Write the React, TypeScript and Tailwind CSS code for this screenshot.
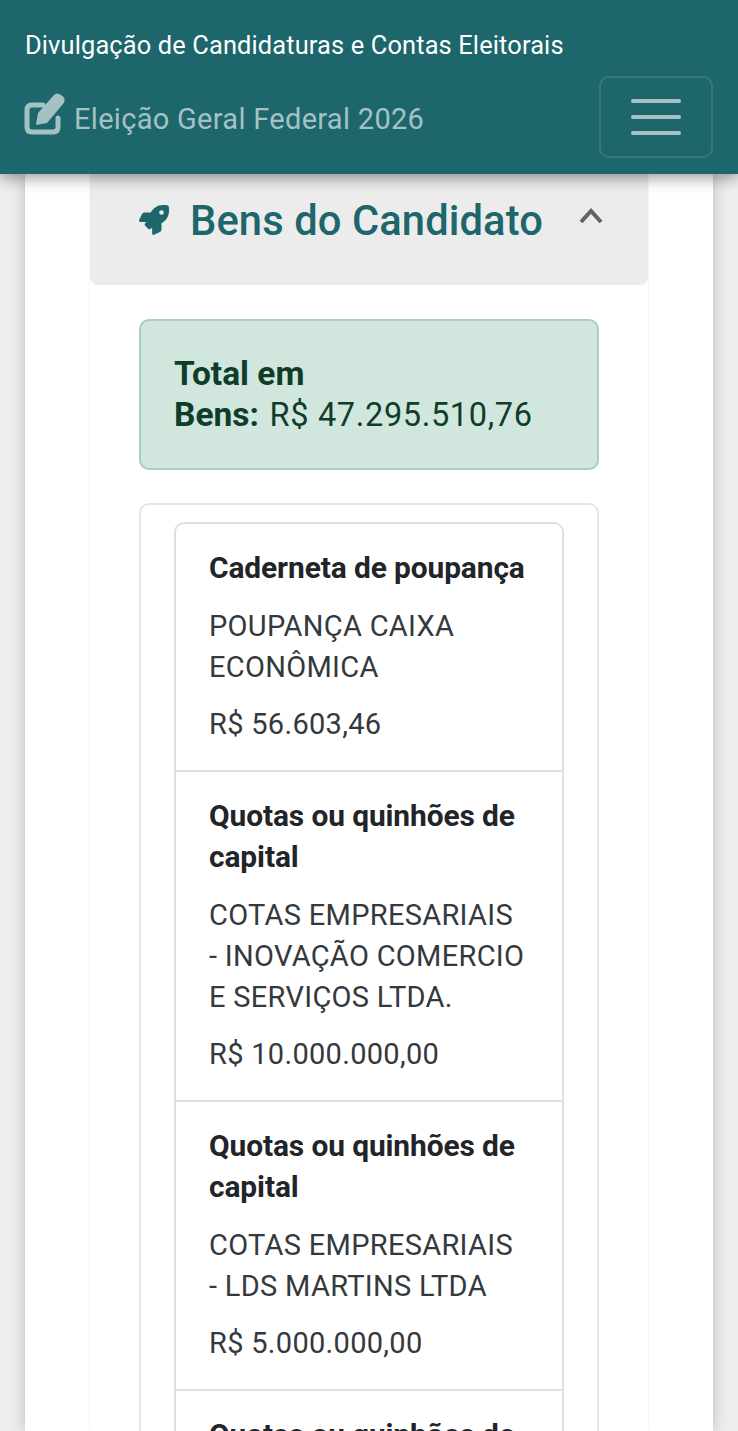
import React from "react";
import { FaRocket } from "react-icons/fa";

const items = [
  { t: ["Caderneta de poupança"], d: ["POUPANÇA CAIXA", "ECONÔMICA"], v: "R$ 56.603,46" },
  { t: ["Quotas ou quinhões de", "capital"], d: ["COTAS EMPRESARIAIS", "- INOVAÇÃO COMERCIO", "E SERVIÇOS LTDA."], v: "R$ 10.000.000,00" },
  { t: ["Quotas ou quinhões de", "capital"], d: ["COTAS EMPRESARIAIS", "- LDS MARTINS LTDA"], v: "R$ 5.000.000,00" },
];

function Item({ t, d, v }: { t: string[]; d: string[]; v: string }) {
  return (
    <div className="border-b-2 border-[#dfe0e1] px-[33px] pt-[23px] pb-[25px]">
      <div className="mb-[18px] text-[29.9px] font-bold tracking-[-0.1px] text-[#212529]">
        {t.map((x) => (
          <div key={x}>{x}</div>
        ))}
      </div>
      <div className="mb-[16px] text-[#34393e]">
        {d.map((x) => (
          <div key={x}>{x}</div>
        ))}
      </div>
      <div className="text-[#34393e]">{v}</div>
    </div>
  );
}

export default function App() {
  return (
    <div className="h-[1431px] overflow-hidden bg-[#eeeeee] font-['Roboto',sans-serif] text-[29px] leading-[41px]">
      <header className="relative z-10 h-[174px] bg-[#1c666c] px-[25px] shadow-[0_4px_14px_rgba(0,0,0,0.4)]">
        <div className="pt-[25px] text-[25.4px] leading-[41px] tracking-[0.14px] text-white">
          Divulgação de Candidaturas e Contas Eleitorais
        </div>
        <div className="mt-[10px] flex items-start justify-between">
          <div className="mt-[17px] flex items-start text-[#a4c2c4]">
            <svg className="-ml-px shrink-0" width="42" height="44" viewBox="0 0 42 44" fill="none">
              <path d="M19 12 H8 Q3 12 3 17 V34 Q3 39 8 39 H29 Q34 39 34 34 V25" stroke="currentColor" strokeWidth="5" strokeLinecap="round" />
              <path d="M12 32 L14 20 L30 2 Q33 -1 37 2 L39.5 4 Q42 8 39 11 L23 30 Z" fill="currentColor" />
            </svg>
            <span className="ml-[8px] mt-[6px] text-[29px] tracking-[0.3px]">Eleição Geral Federal 2026</span>
          </div>
          <button className="flex h-[82px] w-[114px] flex-col items-center justify-center gap-[12px] rounded-[10px] border-2 border-[#34777c]">
            <span className="h-[4px] w-[50px] rounded-sm bg-[#a4c2c4]" />
            <span className="h-[4px] w-[50px] rounded-sm bg-[#a4c2c4]" />
            <span className="h-[4px] w-[50px] rounded-sm bg-[#a4c2c4]" />
          </button>
        </div>
      </header>

      <main className="mx-[25px] h-[1257px] overflow-hidden bg-white px-[65px] shadow-[0_0_14px_rgba(0,0,0,0.22)]">
        <section className="h-full bg-white shadow-[0_0_2px_rgba(0,0,0,0.1)]">
          <div className="flex h-[111px] items-start rounded-b-[8px] bg-[#ececec] pl-[49px]">
            <FaRocket className="mt-[31px] h-[30px] w-[30px] text-[#1c666c]" />
            <h2 className="ml-[21px] mt-[19px] text-[41.7px] leading-[55px] font-medium tracking-[0.1px] text-[#1c666c]">
              Bens do Candidato
            </h2>
            <svg className="ml-[35px] mt-[32px]" width="26" height="18" viewBox="0 0 26 18" fill="none">
              <path d="M3 16 L13 5 L23 16" stroke="#5f6366" strokeWidth="4" />
            </svg>
          </div>
          <div className="px-[49px] pt-[34px]">
            <div className="h-[151px] rounded-[10px] border-2 border-[#a9cfbd] bg-[#d1e7dd] px-[33px] pt-[32px] text-[32.5px] tracking-[0.65px] text-[#0f3d2a]">
              <div className="text-[33.5px] font-bold tracking-normal">Total em</div>
              <div>
                <b className="mr-[2px] text-[33.5px] font-bold tracking-normal">Bens:</b> R$ 47.295.510,76
              </div>
            </div>
            <div className="mt-[33px] rounded-t-[10px] border-2 border-b-0 border-[#e4e5e6] px-[33px] pt-[17px] tracking-[0.3px]">
              <div className="rounded-t-[10px] border-2 border-b-0 border-[#dfe0e1]">
                {items.map((i, n) => (
                  <Item key={n} {...i} />
                ))}
                <div className="h-[60px] px-[33px] pt-[23px] text-[29.9px] font-bold tracking-[-0.1px] text-[#212529]">Quotas ou quinhões de</div>
              </div>
            </div>
          </div>
        </section>
      </main>
    </div>
  );
}
